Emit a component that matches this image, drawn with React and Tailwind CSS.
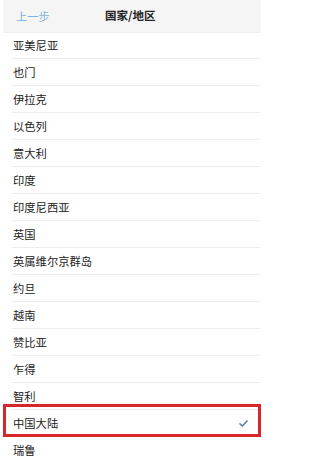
const countries = [
  '亚美尼亚', '也门', '伊拉克', '以色列', '意大利', '印度', '印度尼西亚', '英国',
  '英属维尔京群岛', '约旦', '越南', '赞比亚', '乍得', '智利', '中国大陆', '瑞鲁',
];

function Row({ name, selected }) {
  return (
    <div className="relative h-[27px] pl-[12px]">
      <div className="flex h-full items-center border-b border-[#ececec] mr-[4px] pl-[1px] text-[11.3px] text-[#222]">
        <span className="flex-1">{name}</span>
        {selected && (
          <svg width="9" height="7" viewBox="0 0 9 7" className="mr-[12px]">
            <path d="M1 3.8 L3.4 6 L8 1" fill="none" stroke="#5a7ea6" strokeWidth="1.6" strokeLinecap="round" strokeLinejoin="round" />
          </svg>
        )}
      </div>
      {selected && (
        <div className="absolute left-[3px] right-[3px] top-[-6px] bottom-[0px] border-[3px] border-[#d6282b]" />
      )}
    </div>
  );
}

export default function App() {
  return (
    <div
      className="w-[264px] h-[459px] overflow-hidden bg-white"
      style={{ fontFamily: '"Noto Sans CJK SC", "Noto Sans", sans-serif' }}
    >
      <div className="relative mx-[3px] flex h-[32px] items-center bg-[#f5f5f6] shadow-[0_1px_0_#eeeeee]">
        <span className="ml-[13px] text-[11.3px] text-[#7fb2e0]">上一步</span>
        <span className="absolute left-[102px] text-[11.5px] font-bold text-[#222]">国家/地区</span>
      </div>
      {countries.map((c) => (
        <Row key={c} name={c} selected={c === '中国大陆'} />
      ))}
    </div>
  );
}
